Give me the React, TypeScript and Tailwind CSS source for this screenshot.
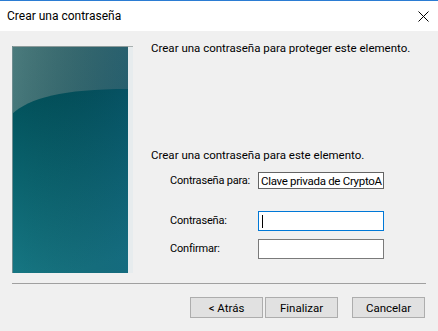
import React from "react";

function SidePicture() {
    return (
        <div className="flex h-[227px] w-[121px] mt-[15px]">
            <svg width="116" height="227" viewBox="0 0 116 227" className="block">
                <defs>
                    <linearGradient id="topGlow" x1="0" y1="0" x2="1" y2="0.6">
                        <stop offset="0" stopColor="#4b7b7d" />
                        <stop offset="1" stopColor="#2a666e" />
                    </linearGradient>
                    <linearGradient id="body" x1="0.3" y1="0" x2="0.5" y2="1">
                        <stop offset="0" stopColor="#02535d" />
                        <stop offset="0.45" stopColor="#0b6570" />
                        <stop offset="1" stopColor="#187a87" />
                    </linearGradient>
                    <linearGradient id="side" x1="0" y1="0" x2="1" y2="0">
                        <stop offset="0" stopColor="#000000" stopOpacity="0" />
                        <stop offset="1" stopColor="#0a3f66" stopOpacity="0.25" />
                    </linearGradient>
                </defs>
                <rect width="116" height="227" fill="url(#topGlow)" />
                <path d="M0 68 C 18 52, 50 43, 116 43 L116 227 L0 227 Z" fill="url(#body)" />
                <rect width="116" height="227" fill="url(#side)" />
                <rect width="116" height="1" fill="#8d9b9b" />
                <rect width="1" height="227" fill="#6f8d90" />
            </svg>
            <div className="w-[5px] h-full bg-[#e7ecee] border-t border-[#a9b0b0]" />
        </div>
    );
}

function Field({ label, value, focused, tall = true }: { label: string; value?: string; focused?: boolean; tall?: boolean }) {
    return (
        <div className="flex items-center">
            <span className="w-[88px] shrink-0 whitespace-nowrap text-[11px] tracking-[-0.2px]">{label}</span>
            <div
                className={`w-[126px] shrink-0 ${tall ? "h-[20px]" : "h-[17px]"} bg-white border flex items-center pl-[2px] overflow-hidden whitespace-nowrap tracking-[-0.3px] ${
                    focused ? "border-[#0078d7]" : value ? "border-[#646464]" : "border-[#7a7a7a]"
                }`}
            >
                {value}
                {focused && <span className="w-px h-[13px] bg-black ml-px" />}
            </div>
        </div>
    );
}

function Btn({ children }: { children: React.ReactNode }) {
    return (
        <button className="w-[73px] h-[21px] bg-[#e1e1e1] border border-[#adadad] flex items-center justify-center">
            {children}
        </button>
    );
}

export default function App() {
    return (
        <div
            className="w-[438px] h-[331px] bg-[#f0f0f0] text-[11.5px] leading-[16px] text-black overflow-hidden"
            style={{ fontFamily: 'Roboto, "Liberation Sans", sans-serif' }}
        >
            <div className="h-[31px] bg-white border-t border-[#2b7cd3] flex items-center justify-between pl-[7px] pr-[9px]">
                <span className="text-[12px]">Crear una contraseña</span>
                <svg width="11" height="11" viewBox="0 0 11 11">
                    <path d="M0.5 0.5 L10.5 10.5 M10.5 0.5 L0.5 10.5" stroke="#000" strokeWidth="1" />
                </svg>
            </div>

            <div className="flex pl-[12px] h-[242px]">
                <SidePicture />
                <div className="ml-[18px] flex flex-col pt-[9px]">
                    <p>Crear una contraseña para proteger este elemento.</p>
                    <p className="mt-[91px]">Crear una contraseña para este elemento.</p>
                    <div className="ml-[19px] flex flex-col">
                        <div className="mt-[9px]">
                            <Field label="Contraseña para:" value="Clave privada de CryptoA" tall={false} />
                        </div>
                        <div className="mt-[22px]">
                            <Field label="Contraseña:" focused />
                        </div>
                        <div className="mt-[8px]">
                            <Field label="Confirmar:" />
                        </div>
                    </div>
                </div>
            </div>

            <div className="mx-[12px] mt-[10px] h-px bg-[#a0a0a0]" />

            <div className="flex justify-end pr-[13px] mt-[13px]">
                <Btn>&lt; Atrás</Btn>
                <div className="ml-[2px]">
                    <Btn>Finalizar</Btn>
                </div>
                <div className="ml-[14px]">
                    <Btn>Cancelar</Btn>
                </div>
            </div>
        </div>
    );
}
